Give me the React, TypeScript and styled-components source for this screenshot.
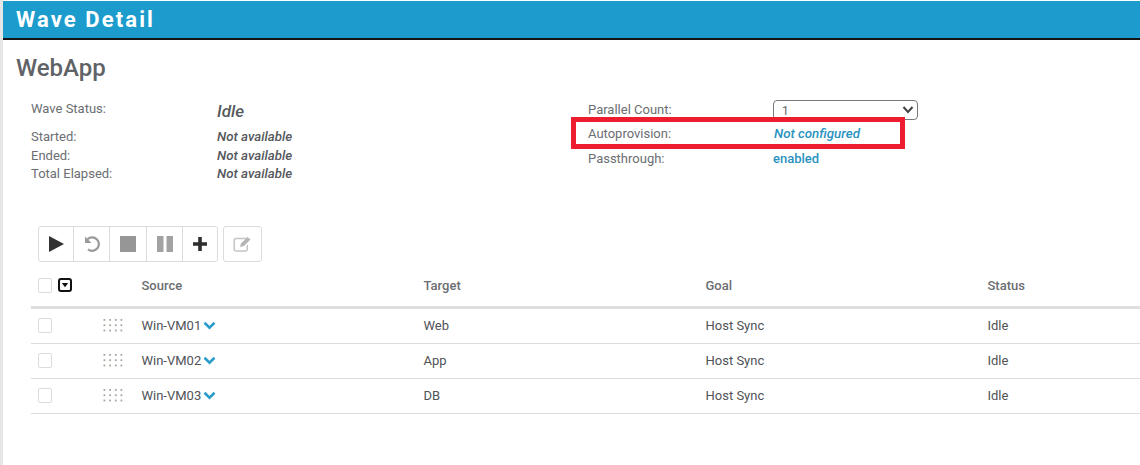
import React from "react";
import styled, { createGlobalStyle } from "styled-components";

const Global = createGlobalStyle`
  html, body { margin: 0; padding: 0; background: #fff; }
  body { font-family: Roboto, "Liberation Sans", sans-serif; overflow: hidden; }
`;
const Page = styled.div`
  width: 1140px; height: 465px; box-sizing: border-box; overflow: hidden; position: relative;
  border-left: 3px solid #e6e6e6; display: flex; flex-direction: column; color: #5f6368;
`;
const Header = styled.header`
  height: 37px; margin: 1px 0 0 -3px; background: #1c9ccd; border-bottom: 2px solid #141414;
  padding-left: 16px; display: flex; align-items: center; flex: none;
  color: #fff; font-size: 22px; font-weight: 700; letter-spacing: 2.1px;
`;
const Title = styled.h1`
  margin: 13px 0 0 13px; font-size: 24px; line-height: 30px; font-weight: 500; color: #5f6266;
`;
const Summary = styled.section`
  display: grid; grid-template-columns: 557px 1fr; margin: 14px 0 0 28px; height: 129px;
`;
const Col = styled.div`display: flex; flex-direction: column;`;
const Row = styled.div<{ $h: number; $start?: boolean }>`
  display: flex; height: ${p => p.$h}px; align-items: ${p => (p.$start ? "flex-start" : "center")}; font-size: 13px;
`;
const LeftLabel = styled.span`width: 186px; color: #6b6e72; line-height: 24px;`;
const RightLabel = styled.span`width: 185px; color: #6b6e72;`;
const Val = styled.span<{ $big?: boolean }>`
  font-style: italic; font-weight: 500;
  font-size: ${p => (p.$big ? 17 : 13.3)}px; line-height: ${p => (p.$big ? 28 : 18)}px; color: #55585c;
`;
const Link = styled.span<{ $italic?: boolean }>`
  color: #2a93bf; font-size: ${p => (p.$italic ? 13.3 : 13)}px; font-weight: 500;
  margin-left: ${p => (p.$italic ? 1 : 0)}px;
  font-style: ${p => (p.$italic ? "italic" : "normal")};
`;
const Select = styled.div`
  width: 145px; height: 20px; box-sizing: border-box; margin-top: 2px;
  border: 1px solid #77797c; border-radius: 4px; padding: 3px 0 0 8px; font-size: 12px; color: #666;
  display: flex; justify-content: space-between; overflow: hidden;
`;
const SelectChevron = styled.svg`margin: 0 3px 0 0; flex: none;`;
const Highlight = styled.div`
  position: absolute; left: 568px; top: 117px; width: 334px; height: 32px; box-sizing: border-box;
  border: 5px solid #ed1c2e;
`;
const Tools = styled.div`display: flex; gap: 5px; margin: 0 0 0 35px; height: 36px;`;
const ToolGroup = styled.div`
  display: flex; border: 1px solid #dcdcdc; border-radius: 3px; height: 36px; box-sizing: border-box;
`;
const ToolBtn = styled.div<{ $w: number; $last?: boolean }>`
  width: ${p => p.$w}px; box-sizing: border-box; display: flex; align-items: center; justify-content: center;
  border-right: ${p => (p.$last ? "none" : "1px solid #dcdcdc")};
`;
const Table = styled.div`margin: 0 0 0 28px; display: flex; flex-direction: column;`;
const Cols = `display: grid; grid-template-columns: 70px 40.5px 282px 282px 282px 1fr; align-items: center;`;
const HeadRow = styled.div`
  ${Cols} height: 38px; padding-bottom: 2px; margin-top: 4px; border-bottom: 3px solid #dedede; font-size: 13px; font-weight: 500; color: #6b6e72;
`;
const BodyRow = styled.div`
  ${Cols} height: 32px; padding-bottom: 2px; border-bottom: 1px solid #dcdcdc; font-size: 13px; color: #4f5256;
`;
const CheckCell = styled.div`display: flex; align-items: center; gap: 6px; padding-left: 7px;`;
const Check = styled.span`
  width: 12px; height: 13px; border: 1px solid #dcdcdc; border-radius: 2px; display: block; background: #fff;
`;
const SourceCell = styled.div`display: flex; align-items: center; gap: 2px;`;
const GripIcon = styled.svg`margin-left: 2px; display: block;`;

const Grip = () => (
  <GripIcon width="20" height="14" viewBox="0 0 20 14">
    {[1, 6.3, 11.6].map(y => [0.5, 6.2, 11.9, 17.5].map(x => <rect key={`${x}-${y}`} x={x} y={y} width="1.8" height="1.8" fill="#aaa69f" />))}
  </GripIcon>
);
const Chevron = () => (
  <svg width="13" height="9" viewBox="0 0 13 9"><path d="M1.5 1.8 6.5 6.6 11.5 1.8" fill="none" stroke="#2a9ccb" strokeWidth="2.6" /></svg>
);

const rows = [["Win-VM01", "Web"], ["Win-VM02", "App"], ["Win-VM03", "DB"]];

export default function App() {
  return (
    <>
      <Global />
      <Page>
        <Header>Wave Detail</Header>
        <Title>WebApp</Title>
        <Summary>
          <Col>
            <Row $h={30} $start><LeftLabel>Wave Status:</LeftLabel><Val $big>Idle</Val></Row>
            <Row $h={20}><LeftLabel>Started:</LeftLabel><Val>Not available</Val></Row>
            <Row $h={18}><LeftLabel>Ended:</LeftLabel><Val>Not available</Val></Row>
            <Row $h={18}><LeftLabel>Total Elapsed:</LeftLabel><Val>Not available</Val></Row>
          </Col>
          <Col>
            <Row $h={24}>
              <RightLabel>Parallel Count:</RightLabel>
              <Select>1
                <SelectChevron width="12" height="12" viewBox="0 0 12 12"><path d="M1.5 3 6 8 10.5 3" fill="none" stroke="#444" strokeWidth="2" /></SelectChevron>
              </Select>
            </Row>
            <Row $h={25}><RightLabel>Autoprovision:</RightLabel><Link $italic>Not configured</Link></Row>
            <Row $h={24}><RightLabel>Passthrough:</RightLabel><Link>enabled</Link></Row>
          </Col>
        </Summary>
        <Tools>
          <ToolGroup>
            <ToolBtn $w={35}><svg width="15" height="16" viewBox="0 0 15 16"><path d="M0 0 15 8 0 16Z" fill="#333" /></svg></ToolBtn>
            <ToolBtn $w={36}><svg width="16" height="16" viewBox="0 0 16 16"><path d="M3.6 3.2A6.7 6.7 0 1 1 4 13.4" fill="none" stroke="#999" strokeWidth="2.2" /><path d="M1 .5v6.5h6.5Z" fill="#999" /></svg></ToolBtn>
            <ToolBtn $w={37}><svg width="16" height="16" viewBox="0 0 16 16"><rect width="16" height="16" fill="#969696" /></svg></ToolBtn>
            <ToolBtn $w={36}><svg width="16" height="16" viewBox="0 0 16 16"><rect width="6.5" height="16" fill="#a2a2a2" /><rect x="9.5" width="6.5" height="16" fill="#a2a2a2" /></svg></ToolBtn>
            <ToolBtn $w={34} $last><svg width="14" height="14" viewBox="0 0 14 14"><path d="M7 0v14M0 7h14" stroke="#2e2e2e" strokeWidth="3.6" /></svg></ToolBtn>
          </ToolGroup>
          <ToolGroup>
            <ToolBtn $w={37} $last><svg width="19" height="16" viewBox="0 0 19 16"><path d="M13 2.5H3A1.8 1.8 0 0 0 1.2 4.3v8.9A1.8 1.8 0 0 0 3 15h9.5a1.8 1.8 0 0 0 1.8-1.8V9" fill="none" stroke="#c4c4c4" strokeWidth="1.5" /><path d="M7 11l1-3.5L14.5 1l3 2.5L11 10Z" fill="#b5b5b5" /></svg></ToolBtn>
          </ToolGroup>
        </Tools>
        <Table>
          <HeadRow>
            <CheckCell>
              <Check />
              <svg width="14" height="14" viewBox="0 0 14 14"><rect x="1" y="1" width="12" height="12" rx="2" fill="#fff" stroke="#111" strokeWidth="2" /><path d="M3.8 5h6.4L7 9.2Z" fill="#111" /></svg>
            </CheckCell>
            <span />
            <span>Source</span><span>Target</span><span>Goal</span><span>Status</span>
          </HeadRow>
          {rows.map(([s, t]) => (
            <BodyRow key={s}>
              <CheckCell><Check /></CheckCell>
              <Grip />
              <SourceCell>{s} <Chevron /></SourceCell>
              <span>{t}</span><span>Host Sync</span><span>Idle</span>
            </BodyRow>
          ))}
        </Table>
        <Highlight />
      </Page>
    </>
  );
}
